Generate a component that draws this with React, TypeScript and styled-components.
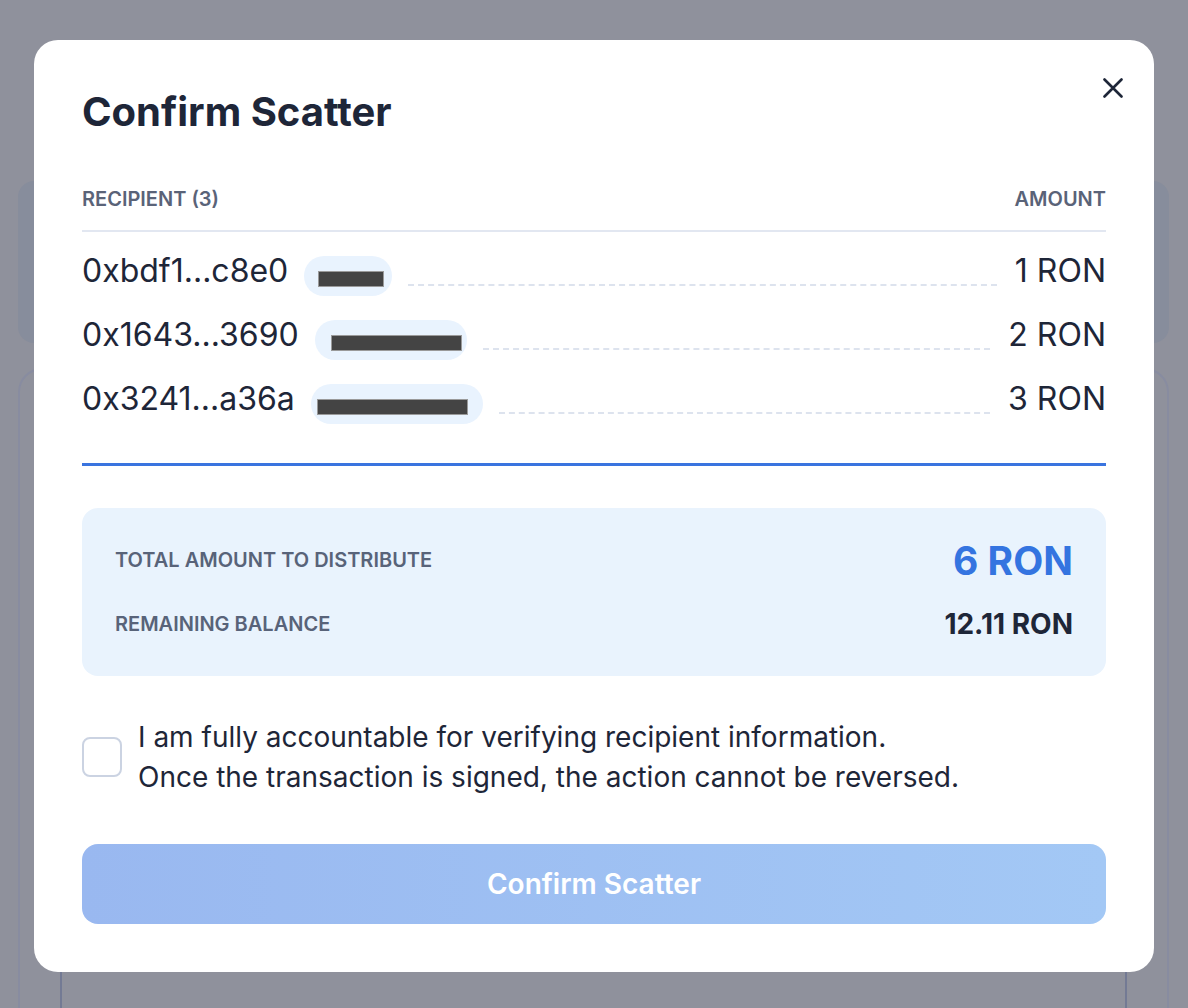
import React from "react";
import styled, { createGlobalStyle } from "styled-components";

const Global = createGlobalStyle`
  html, body { margin: 0; padding: 0; }
  body {
    background: #8f919c;
    font-family: Inter, "Noto Sans", "Liberation Sans", sans-serif;
    overflow: hidden;
  }
  * { box-sizing: border-box; }
`;

const Page = styled.div`
  height: 1008px;
  padding: 181px 19px 0 18px;
  display: flex;
  flex-direction: column;
  gap: 25px;
  overflow: hidden;
`;

const BgCard = styled.div`
  height: 162px;
  border-radius: 16px;
  background: #878d9c;
`;

const BgPanel = styled.div`
  flex: 1;
  border: 2px solid #888ca0;
  border-bottom: none;
  border-radius: 24px 24px 0 0;
  padding: 60px 40px 0;
  display: flex;
`;

const BgInner = styled.div`
  flex: 1;
  border: 2px solid #737a94;
  border-bottom: none;
  border-radius: 12px 12px 0 0;
`;

const Overlay = styled.div`
  position: fixed;
  inset: 0;
  display: flex;
  justify-content: center;
  align-items: flex-start;
  padding-top: 40px;
`;

const Modal = styled.div`
  position: relative;
  width: 1120px;
  background: #ffffff;
  border-radius: 24px;
  padding: 48px;
  display: flex;
  flex-direction: column;
`;

const Title = styled.h1`
  margin: 0;
  font-size: 40px;
  line-height: 48px;
  font-weight: 700;
  color: #1e2638;
`;

const CloseButton = styled.button`
  position: absolute;
  top: 32px;
  right: 25px;
  width: 32px;
  height: 32px;
  padding: 0;
  border: none;
  background: transparent;
  display: flex;
  align-items: center;
  justify-content: center;
  cursor: pointer;
`;

const TableHead = styled.div`
  margin-top: 51px;
  display: flex;
  justify-content: space-between;
  align-items: center;
  padding-bottom: 19px;
  border-bottom: 2px solid #e2e7f1;
`;

const HeadLabel = styled.span`
  font-size: 20px;
  line-height: 24px;
  font-weight: 600;
  color: #5a6378;
  text-transform: uppercase;
`;

const Rows = styled.div`
  padding-top: 12px;
  padding-bottom: 27px;
  border-bottom: 3px solid #3a74df;
  display: flex;
  flex-direction: column;
`;

const Row = styled.div`
  height: 64px;
  display: flex;
  align-items: center;
  gap: 16px;
`;

const Address = styled.span`
  font-size: 32px;
  line-height: 40px;
  font-weight: 400;
  color: #1e2638;
  padding-bottom: 10px;
  white-space: nowrap;
`;

const Amount = styled(Address)`
  margin-left: 2px;
`;

const Tag = styled.span<{ $w: number; $pad: number }>`
  width: ${(p) => p.$w}px;
  height: 40px;
  border-radius: 20px;
  background: #e9f3fe;
  display: flex;
  align-items: flex-start;
  padding-top: 15px;
  padding-left: ${(p) => p.$pad}px;
  flex-shrink: 0;
`;

const Redact = styled.span<{ $w: number }>`
  width: ${(p) => p.$w}px;
  height: 16px;
  background: #444444;
  border: 1px solid #9a9a9a;
`;

const Leader = styled.span`
  flex: 1;
  margin-top: 18px;
  border-bottom: 2px dashed #dde3ee;
`;

const Summary = styled.div`
  margin-top: 42px;
  background: #e9f3fd;
  border-radius: 16px;
  padding: 32px 33px;
  display: flex;
  flex-direction: column;
  gap: 24px;
`;

const SummaryRow = styled.div`
  height: 40px;
  display: flex;
  justify-content: space-between;
  align-items: center;
`;

const SummaryLabel = styled.span`
  font-size: 20px;
  font-weight: 600;
  color: #586379;
  text-transform: uppercase;
`;

const SummaryValue = styled.span<{ $accent?: boolean }>`
  font-size: ${(p) => (p.$accent ? "39px" : "28px")};
  font-weight: 700;
  color: ${(p) => (p.$accent ? "#3474e0" : "#1e2638")};
`;

const Agreement = styled.label`
  margin-top: 41px;
  display: flex;
  align-items: center;
  gap: 16px;
  cursor: pointer;
`;

const CheckBox = styled.span`
  width: 40px;
  height: 40px;
  flex-shrink: 0;
  border: 2px solid #cbd3e2;
  border-radius: 8px;
  background: #ffffff;
`;

const AgreementText = styled.span`
  font-size: 28px;
  line-height: 40px;
  color: #1e2638;
`;

const SubmitButton = styled.button`
  margin-top: 47px;
  height: 80px;
  width: 100%;
  border: none;
  border-radius: 16px;
  background: linear-gradient(90deg, #99b8f0 0%, #a3c8f5 100%);
  color: #ffffff;
  font-family: inherit;
  font-size: 28px;
  font-weight: 600;
  cursor: not-allowed;
`;

const recipients = [
  { address: "0xbdf1...c8e0", amount: "1 RON", tagW: 88, pad: 14, bar: 66 },
  { address: "0x1643...3690", amount: "2 RON", tagW: 152, pad: 16, bar: 131 },
  { address: "0x3241...a36a", amount: "3 RON", tagW: 172, pad: 6, bar: 151 },
];

export default function App() {
  return (
    <>
      <Global />
      <Page>
        <BgCard />
        <BgPanel>
          <BgInner />
        </BgPanel>
      </Page>
      <Overlay>
        <Modal>
          <CloseButton aria-label="Close">
            <svg width="20" height="20" viewBox="0 0 20 20">
              <path
                d="M1.5 1.5 L18.5 18.5 M18.5 1.5 L1.5 18.5"
                stroke="#1e2638"
                strokeWidth="2.6"
                strokeLinecap="round"
                fill="none"
              />
            </svg>
          </CloseButton>
          <Title>Confirm Scatter</Title>
          <TableHead>
            <HeadLabel>Recipient (3)</HeadLabel>
            <HeadLabel>Amount</HeadLabel>
          </TableHead>
          <Rows>
            {recipients.map((r) => (
              <Row key={r.address}>
                <Address>{r.address}</Address>
                <Tag $w={r.tagW} $pad={r.pad}>
                  <Redact $w={r.bar} />
                </Tag>
                <Leader />
                <Amount>{r.amount}</Amount>
              </Row>
            ))}
          </Rows>
          <Summary>
            <SummaryRow>
              <SummaryLabel>Total amount to distribute</SummaryLabel>
              <SummaryValue $accent>6 RON</SummaryValue>
            </SummaryRow>
            <SummaryRow>
              <SummaryLabel>Remaining balance</SummaryLabel>
              <SummaryValue>12.11 RON</SummaryValue>
            </SummaryRow>
          </Summary>
          <Agreement>
            <CheckBox />
            <AgreementText>
              I am fully accountable for verifying recipient information.
              <br />
              Once the transaction is signed, the action cannot be reversed.
            </AgreementText>
          </Agreement>
          <SubmitButton disabled>Confirm Scatter</SubmitButton>
        </Modal>
      </Overlay>
    </>
  );
}
